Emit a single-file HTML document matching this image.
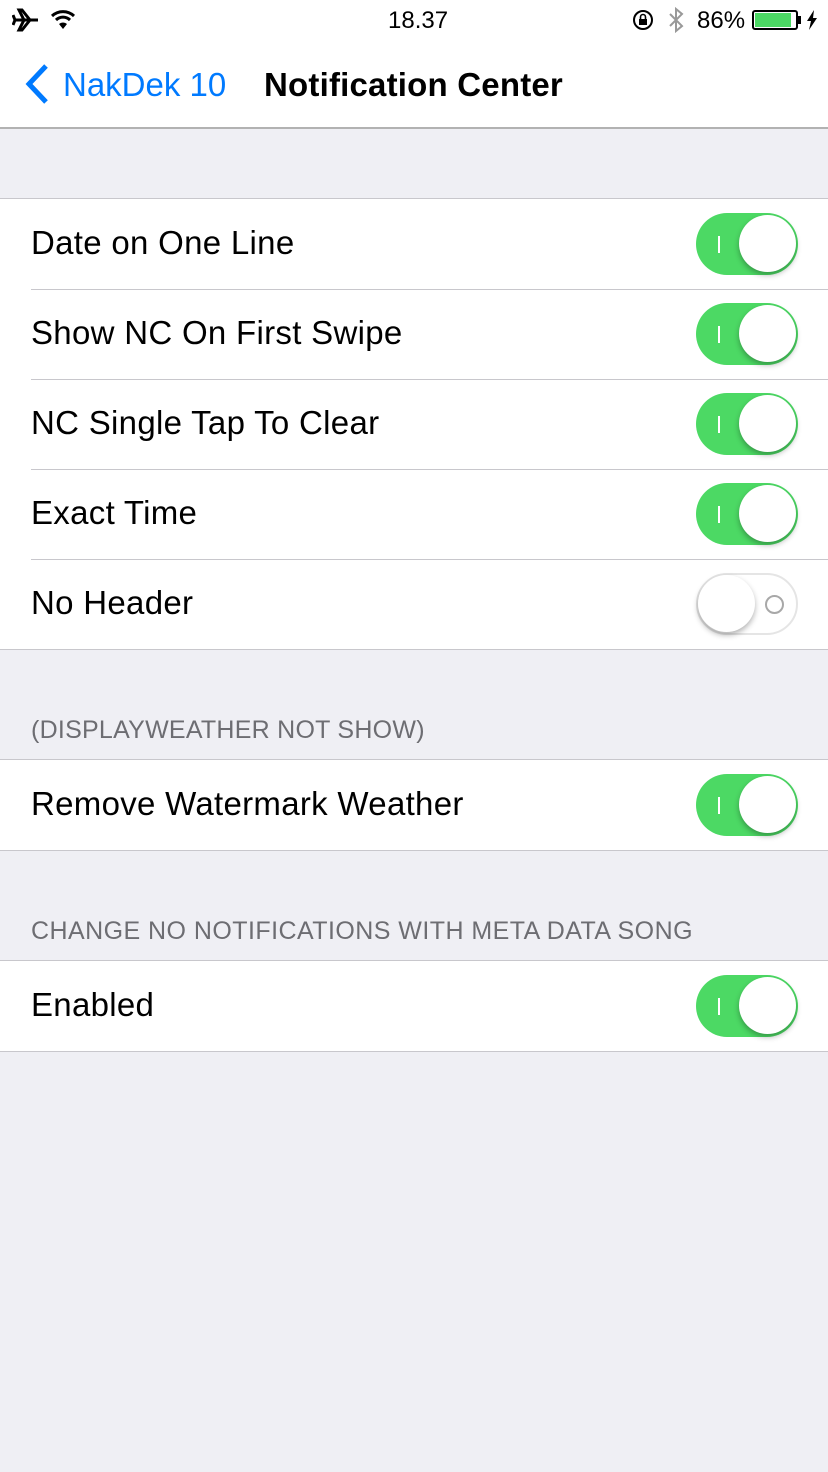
<!DOCTYPE html>
<html><head><meta charset="utf-8"><style>
*{margin:0;padding:0;box-sizing:border-box}
body{width:828px;height:1472px;background:#efeff4;font-family:"Liberation Sans",sans-serif;position:relative;overflow:hidden}
.top{position:absolute;left:0;top:0;width:828px;height:129px;background:#fff;border-bottom:2px solid #b2b2b2}
.t{position:absolute;white-space:nowrap}
.group{position:absolute;left:0;width:828px;background:#fff;border-top:1px solid #c8c7cc;border-bottom:1px solid #c8c7cc}
.row{position:relative;height:90px}
.row+.row::before{content:"";position:absolute;left:31px;right:0;top:0;border-top:1px solid #c8c7cc}
.row span{position:absolute;left:31px;top:25px;font-size:33px;letter-spacing:.3px;color:#000}
.sw{position:absolute;left:696px;top:14px;width:102px;height:62px;border-radius:31px;background:#4cd964}
.sw .k{position:absolute;right:2px;top:2px;width:57px;height:57px;border-radius:50%;background:#fff;box-shadow:0 3px 6px rgba(0,0,0,.3)}
.sw .l{position:absolute;left:22px;top:23px;width:2px;height:17px;background:#fff}
.sw.off{background:#fff;border:2px solid #e5e5e5}
.sw.off .k{left:0;right:auto;top:0}
.sw.off .o{position:absolute;right:12px;top:20px;width:19px;height:19px;border:2px solid #a8a8a8;border-radius:50%}
.hd{position:absolute;left:31px;font-size:25px;color:#6d6d72;letter-spacing:.25px}
</style></head><body>
<div class="top">
<svg class="t" style="left:12px;top:8px" width="28" height="24" viewBox="0 0 28 24"><path d="M2 12h24M12 12l-5-10h3l8 10M12 12l-5 10h3l8-10M3 12l-2-5M3 12l-2 5" stroke="#000" stroke-width="3" fill="none"/></svg>
<svg class="t" style="left:50px;top:8px" width="26" height="22" viewBox="0 0 26 22"><path d="M2 8a16 16 0 0 1 22 0M6 12a10 10 0 0 1 14 0" stroke="#000" stroke-width="3" fill="none"/><path d="M13 21l-4-5a6 6 0 0 1 8 0z" fill="#000"/></svg>
<div class="t" style="left:388px;top:7px;font-size:24px">18.37</div>
<svg class="t" style="left:632px;top:9px" width="24" height="24" viewBox="0 0 24 24"><circle cx="11" cy="11" r="9" stroke="#000" stroke-width="2" fill="none"/><rect x="7" y="10" width="8" height="6" fill="#000"/><path d="M8.5 10V8a2.5 2.5 0 0 1 5 0v2" stroke="#000" stroke-width="1.6" fill="none"/></svg>
<svg class="t" style="left:668px;top:7px" width="16" height="26" viewBox="0 0 16 26"><path d="M2 7l12 12-6 5V2l6 5L2 19" stroke="#999" stroke-width="2" fill="none"/></svg>
<div class="t" style="left:697px;top:7px;font-size:24px">86%</div>
<div class="t" style="left:752px;top:10px;width:46px;height:20px;border:2px solid #000;border-radius:3px"><div style="margin:1px;width:36px;height:14px;background:#4cd964"></div></div>
<div class="t" style="left:798px;top:16px;width:3px;height:8px;background:#000"></div>
<svg class="t" style="left:806px;top:10px" width="12" height="20" viewBox="0 0 12 20"><path d="M8 0L1 11h4l-2 9 8-12H7z" fill="#000"/></svg>
<svg class="t" style="left:24px;top:63px" width="28" height="42" viewBox="0 0 28 42"><path d="M22 3L5 21l17 18" stroke="#007aff" stroke-width="5" fill="none"/></svg>
<div class="t" style="left:63px;top:66px;font-size:33px;color:#007aff">NakDek 10</div>
<div class="t" style="left:264px;top:66px;font-size:33px;font-weight:bold;color:#000;letter-spacing:.2px">Notification Center</div>
</div>
<div class="group" style="top:198px">
<div class="row"><span>Date on One Line</span><div class="sw"><div class="l"></div><div class="k"></div></div></div>
<div class="row"><span>Show NC On First Swipe</span><div class="sw"><div class="l"></div><div class="k"></div></div></div>
<div class="row"><span>NC Single Tap To Clear</span><div class="sw"><div class="l"></div><div class="k"></div></div></div>
<div class="row"><span>Exact Time</span><div class="sw"><div class="l"></div><div class="k"></div></div></div>
<div class="row"><span>No Header</span><div class="sw off"><div class="o"></div><div class="k"></div></div></div>
</div>
<div class="hd" style="top:716px">(DISPLAYWEATHER NOT SHOW)</div>
<div class="group" style="top:759px">
<div class="row"><span>Remove Watermark Weather</span><div class="sw"><div class="l"></div><div class="k"></div></div></div>
</div>
<div class="hd" style="top:917px;letter-spacing:.45px">CHANGE NO NOTIFICATIONS WITH META DATA SONG</div>
<div class="group" style="top:960px">
<div class="row"><span>Enabled</span><div class="sw"><div class="l"></div><div class="k"></div></div></div>
</div>
</body></html>
